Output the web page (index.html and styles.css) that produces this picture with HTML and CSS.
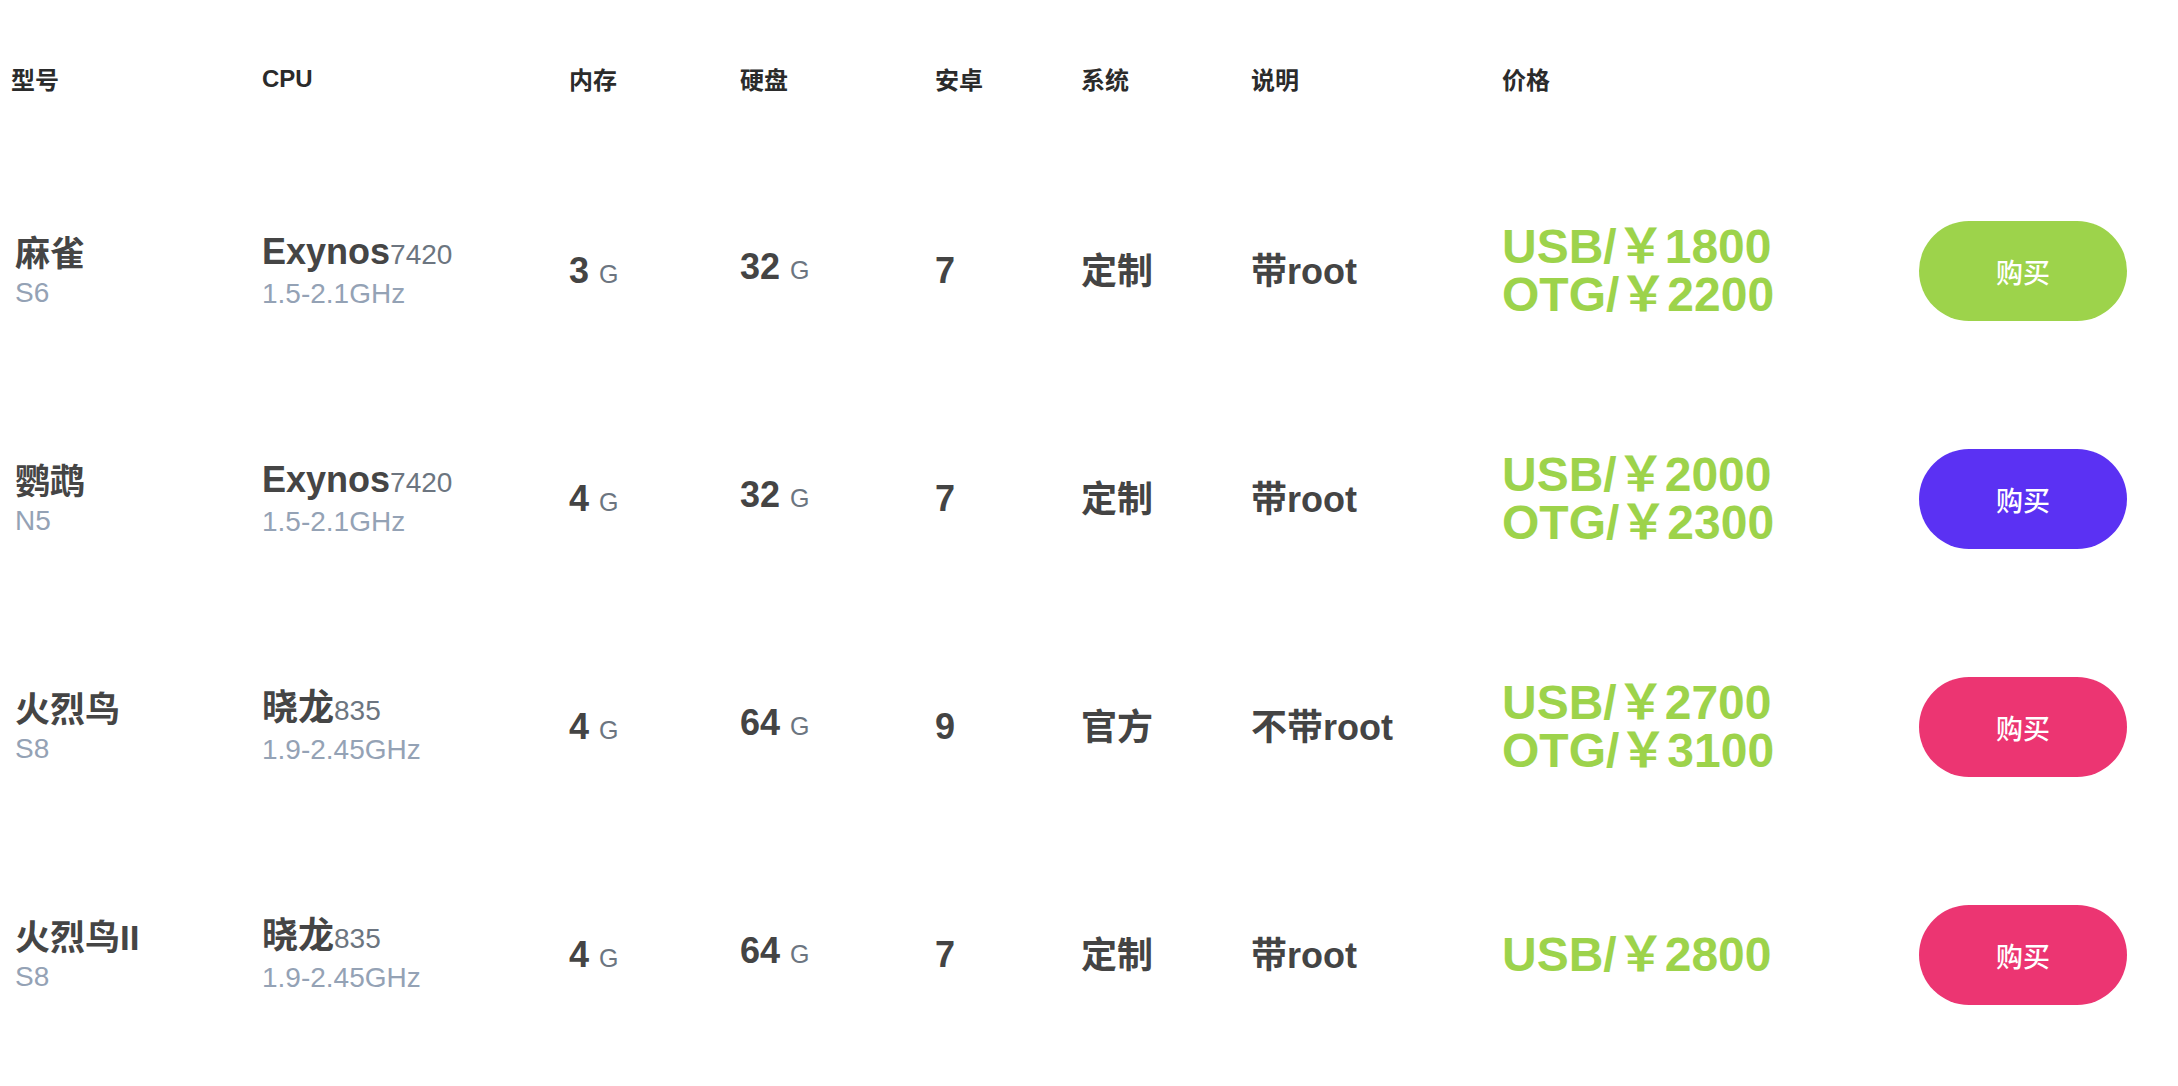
FILE: index.html
```html
<!DOCTYPE html>
<html lang="zh-CN">
<head>
<meta charset="utf-8">
<title>机型价格</title>
<link rel="stylesheet" href="styles.css">
</head>
<body>
<div class="table">
  <div class="row head">
    <div class="c">型号</div>
    <div class="c">CPU</div>
    <div class="c">内存</div>
    <div class="c">硬盘</div>
    <div class="c">安卓</div>
    <div class="c">系统</div>
    <div class="c">说明</div>
    <div class="c">价格</div>
    <div class="c"></div>
  </div>

  <div class="row">
    <div class="c name"><div class="main">麻雀</div><div class="sub">S6</div></div>
    <div class="c cpu"><div class="main">Exynos<span class="model">7420</span></div><div class="sub">1.5-2.1GHz</div></div>
    <div class="c val">3 <span class="unit">G</span></div>
    <div class="c val disk">32 <span class="unit">G</span></div>
    <div class="c val">7</div>
    <div class="c val cjk">定制</div>
    <div class="c val cjk">带root</div>
    <div class="c price"><div>USB/￥1800</div><div>OTG/￥2200</div></div>
    <div class="c"><a class="buy green">购买</a></div>
  </div>

  <div class="row">
    <div class="c name"><div class="main">鹦鹉</div><div class="sub">N5</div></div>
    <div class="c cpu"><div class="main">Exynos<span class="model">7420</span></div><div class="sub">1.5-2.1GHz</div></div>
    <div class="c val">4 <span class="unit">G</span></div>
    <div class="c val disk">32 <span class="unit">G</span></div>
    <div class="c val">7</div>
    <div class="c val cjk">定制</div>
    <div class="c val cjk">带root</div>
    <div class="c price"><div>USB/￥2000</div><div>OTG/￥2300</div></div>
    <div class="c"><a class="buy purple">购买</a></div>
  </div>

  <div class="row">
    <div class="c name"><div class="main">火烈鸟</div><div class="sub">S8</div></div>
    <div class="c cpu"><div class="main">晓龙<span class="model">835</span></div><div class="sub">1.9-2.45GHz</div></div>
    <div class="c val">4 <span class="unit">G</span></div>
    <div class="c val disk">64 <span class="unit">G</span></div>
    <div class="c val">9</div>
    <div class="c val cjk">官方</div>
    <div class="c val cjk">不带root</div>
    <div class="c price"><div>USB/￥2700</div><div>OTG/￥3100</div></div>
    <div class="c"><a class="buy pink">购买</a></div>
  </div>

  <div class="row">
    <div class="c name"><div class="main">火烈鸟II</div><div class="sub">S8</div></div>
    <div class="c cpu"><div class="main">晓龙<span class="model">835</span></div><div class="sub">1.9-2.45GHz</div></div>
    <div class="c val">4 <span class="unit">G</span></div>
    <div class="c val disk">64 <span class="unit">G</span></div>
    <div class="c val">7</div>
    <div class="c val cjk">定制</div>
    <div class="c val cjk">带root</div>
    <div class="c price"><div>USB/￥2800</div></div>
    <div class="c"><a class="buy pink">购买</a></div>
  </div>
</div>
</body>
</html>
```

FILE: styles.css
```css
html, body {
  margin: 0;
  padding: 0;
  background: #ffffff;
}

body {
  font-family: "Liberation Sans", Arial, "Noto Sans CJK SC", sans-serif;
  color: #444444;
}

.table {
  padding-left: 11px;
}

.row {
  display: grid;
  grid-template-columns: 251px 307px 171px 195px 146px 170px 251px 417px 208px;
  align-items: center;
  height: 228px;
}

.row.head {
  height: 157px;
  font-size: 24px;
  font-weight: bold;
  color: #2b2b2b;
}

.name {
  padding-left: 4px;
}

.name .main,
.cpu .main {
  font-size: 35px;
  font-weight: bold;
  line-height: 38px;
  color: #454545;
}

.cpu .main {
  font-size: 36px;
}

.cpu .model {
  font-size: 28px;
  font-weight: normal;
  color: #6c7580;
}

.sub {
  margin-top: 5px;
  font-size: 28px;
  line-height: 30px;
  color: #94a2b5;
}

.val {
  font-size: 36px;
  font-weight: bold;
  color: #444444;
}

.val.disk {
  padding-bottom: 8px;
}

.val.cjk {
  padding-bottom: 6px;
}

.unit {
  font-size: 25px;
  font-weight: normal;
  color: #6c7580;
}

.price {
  font-size: 48px;
  font-weight: bold;
  line-height: 48px;
  color: #9dd34b;
}

.buy {
  display: flex;
  align-items: center;
  justify-content: center;
  width: 208px;
  height: 100px;
  border-radius: 50px;
  color: #ffffff;
  font-family: "Noto Sans CJK SC", sans-serif;
  font-size: 27px;
  font-weight: 500;
}

.green { background: #9dd34b; }
.purple { background: #5b31f3; }
.pink { background: #ec3572; }
```
